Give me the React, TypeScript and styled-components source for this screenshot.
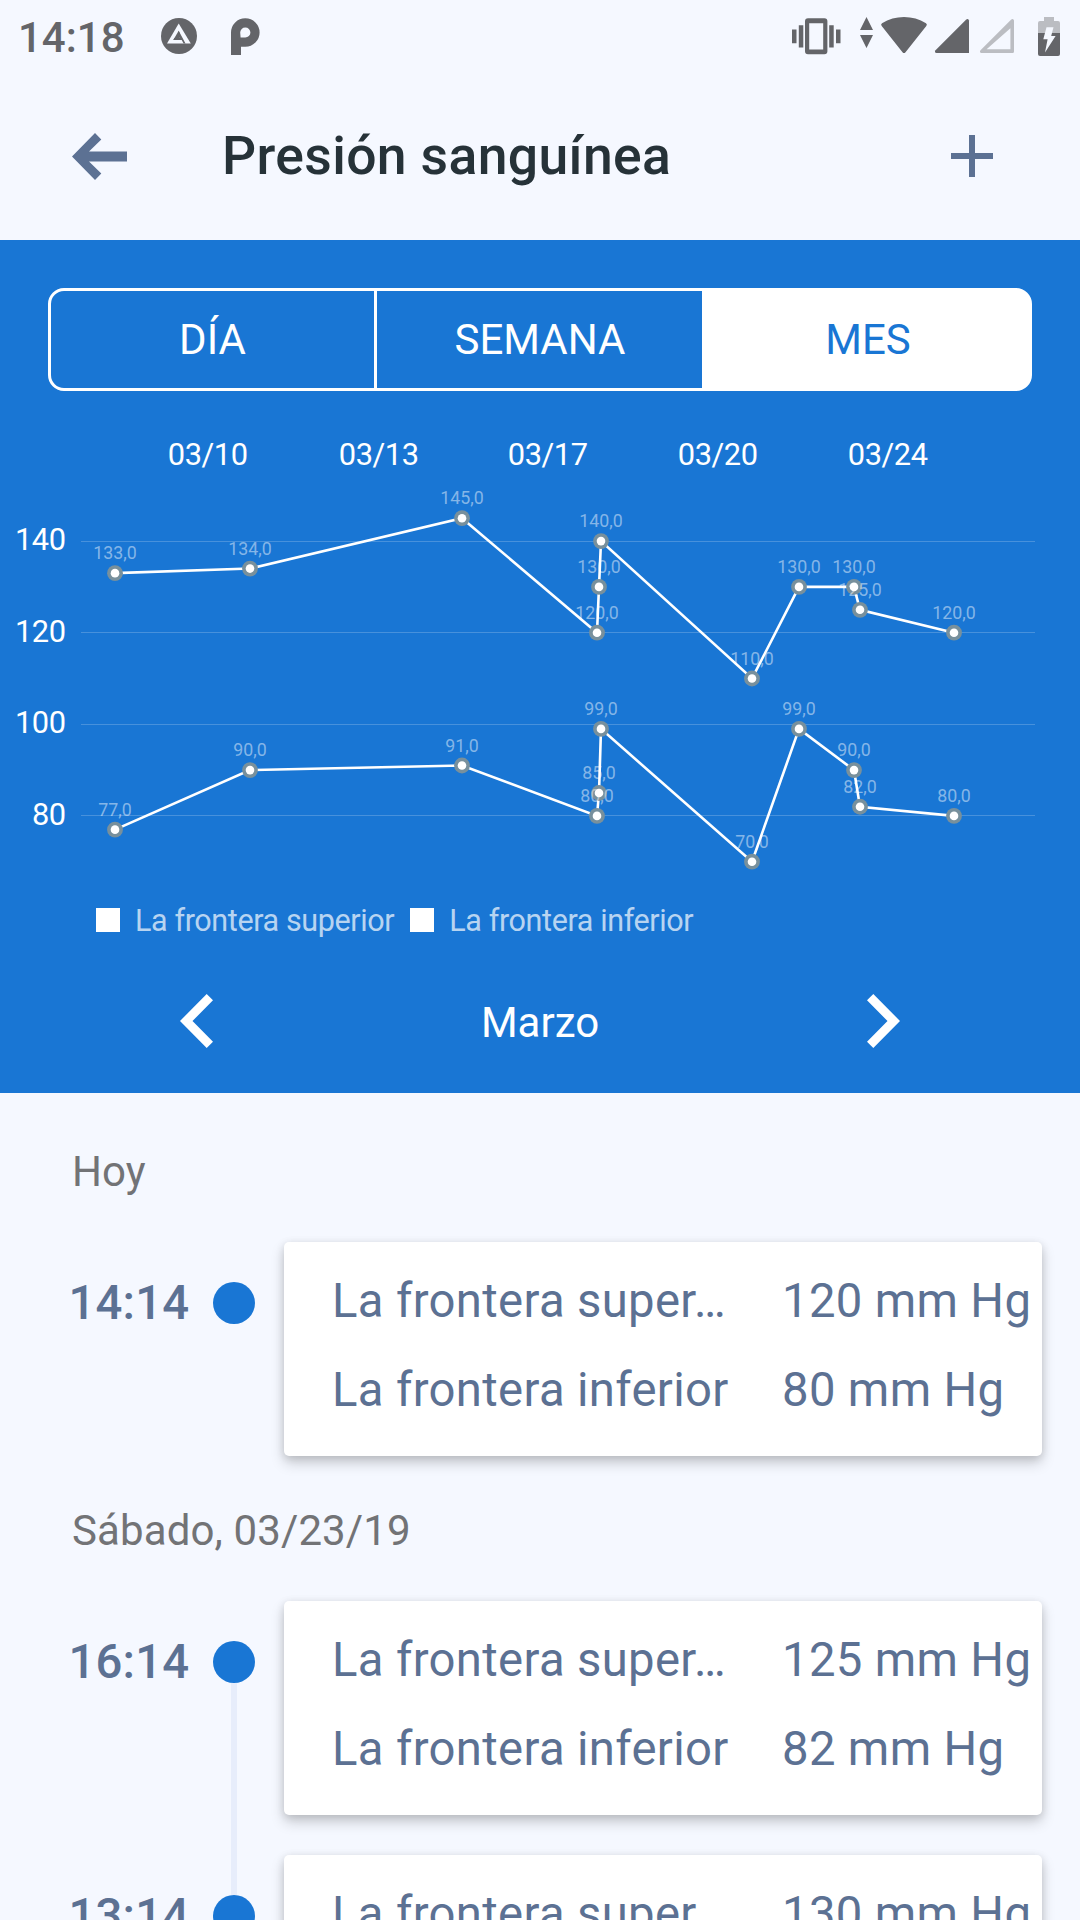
import React from "react";
import styled, { createGlobalStyle } from "styled-components";

const BLUE = "#1976d4";
const SLATE = "#5c7193";
const PAPER = "#f5f8ff";
const STATUS = "#646569";

const GlobalStyle = createGlobalStyle`
  *, *::before, *::after { box-sizing: border-box; }
  body { margin: 0; background: ${PAPER}; }
`;

const Screen = styled.div`
  width: 1080px;
  height: 1920px;
  overflow: hidden;
  display: flex;
  flex-direction: column;
  background: ${PAPER};
  font-family: Roboto, "Noto Sans", sans-serif;
`;

const StatusBar = styled.div`
  height: 72px;
  flex: none;
  display: flex;
  align-items: center;
  padding: 0 20px 0 18px;
  color: ${STATUS};
`;

const Clock = styled.span`
  width: 140px;
  font-size: 42px;
  line-height: 50px;
  padding-top: 4px;
  font-weight: 500;
`;

const Icon = styled.svg<{ $gap?: number }>`
  display: block;
  flex: none;
  overflow: visible;
  margin-left: ${(p) => p.$gap ?? 0}px;
`;

const Spacer = styled.div`
  flex: 1;
`;

const AppBar = styled.header`
  height: 168px;
  flex: none;
  display: flex;
  align-items: center;
  padding: 0 87px 0 72px;
`;

const IconButton = styled.button`
  display: flex;
  border: 0;
  padding: 0;
  background: none;
`;

const Title = styled.h1`
  flex: 1;
  margin: 0 0 0 95px;
  padding-bottom: 1px;
  font-size: 53.5px;
  line-height: 62px;
  font-weight: 500;
  letter-spacing: 0.35px;
  color: #263238;
`;

const Panel = styled.section`
  height: 853px;
  flex: none;
  display: flex;
  flex-direction: column;
  background: ${BLUE};
  padding-top: 48px;
`;

const Tabs = styled.div`
  display: grid;
  grid-template-columns: 329px 325px 330px;
  height: 103px;
  margin: 0 48px;
`;

const Tab = styled.button<{ $active?: boolean }>`
  border: 3px solid #fff;
  padding: 0;
  font-family: inherit;
  font-size: 42px;
  background: ${(p) => (p.$active ? "#fff" : "transparent")};
  color: ${(p) => (p.$active ? BLUE : "#fff")};

  &:first-child {
    border-radius: 16px 0 0 16px;
  }
  &:nth-child(2) {
    border-width: 3px 0;
    padding-left: 1px;
  }
  &:last-child {
    border-radius: 0 16px 16px 0;
    padding-left: 2px;
  }
`;

const Chart = styled.svg`
  display: block;
  flex: none;
  font-family: Roboto, "Noto Sans", sans-serif;
`;

const Legend = styled.div`
  display: flex;
  align-items: center;
  height: 40px;
  padding-left: 96px;
  gap: 16px;
`;

const LegendItem = styled.div`
  display: flex;
  align-items: center;
  gap: 15px;
  font-size: 30.5px;
  line-height: 36px;
  letter-spacing: -0.38px;
  color: rgba(255, 255, 255, 0.7);
  white-space: nowrap;
`;

const LegendText = styled.span`
  padding-top: 2px;
`;

const Swatch = styled.span`
  width: 24px;
  height: 24px;
  background: #fff;
`;

const MonthNav = styled.nav`
  flex: 1;
  display: flex;
  align-items: center;
  justify-content: space-between;
  padding: 8px 180px 0 180px;
`;

const MonthName = styled.span`
  font-size: 42px;
  line-height: 50px;
  padding-top: 4px;
  color: #fff;
`;

const History = styled.main`
  flex: 1;
  display: flex;
  flex-direction: column;
`;

const DayTitle = styled.h2`
  margin: 0;
  padding: 54px 0 45px 72px;
  font-size: 42px;
  line-height: 50px;
  font-weight: 400;
  letter-spacing: 0.12px;
  color: #727376;
`;

const Day = styled.section`
  display: flex;
  flex-direction: column;
  height: 359px;
  flex: none;
`;

const Entry = styled.article`
  display: flex;
  flex: none;
  height: 254px;
`;

const Time = styled.time`
  width: 213px;
  padding: 33px 0 0 68.5px;
  font-size: 47.25px;
  line-height: 56px;
  font-weight: 500;
  letter-spacing: 0.2px;
  color: ${SLATE};
`;

const Rail = styled.div`
  width: 42px;
  display: flex;
  flex-direction: column;
  align-items: center;
  padding-top: 40px;
`;

const Dot = styled.span`
  flex: none;
  width: 42px;
  height: 42px;
  border-radius: 50%;
  background: ${BLUE};
`;

const Connector = styled.span`
  flex: none;
  width: 6px;
  height: 212px;
  background: #e7edfb;
`;

const Card = styled.div`
  width: 758px;
  height: 214px;
  margin-left: 29px;
  padding: 31px 0 0 48px;
  border-radius: 5px;
  background: #fff;
  box-shadow: 0 7px 14px rgba(0, 0, 0, 0.18), 0 2px 9px rgba(0, 0, 0, 0.12);
`;

const Reading = styled.div`
  display: flex;
  height: 89px;
  font-size: 47.25px;
  line-height: 56px;
  letter-spacing: 0.34px;
  white-space: nowrap;
  color: ${SLATE};
`;

const ReadingName = styled.span`
  width: 402px;
  margin-right: 48px;
`;

type Sample = { x: number; high: number; low: number };

const samples: Sample[] = [
  { x: 115, high: 133, low: 77 },
  { x: 250, high: 134, low: 90 },
  { x: 462, high: 145, low: 91 },
  { x: 597, high: 120, low: 80 },
  { x: 599, high: 130, low: 85 },
  { x: 601, high: 140, low: 99 },
  { x: 752, high: 110, low: 70 },
  { x: 799, high: 130, low: 99 },
  { x: 854, high: 130, low: 90 },
  { x: 860, high: 125, low: 82 },
  { x: 954, high: 120, low: 80 },
];

const dates = [
  { x: 208, label: "03/10" },
  { x: 379, label: "03/13" },
  { x: 548, label: "03/17" },
  { x: 718, label: "03/20" },
  { x: 888, label: "03/24" },
];

const CHART_TOP = 391;
const yOf = (v: number) => 541.1 - CHART_TOP + (140 - v) * 4.58;

function Series({ pick }: { pick: "high" | "low" }) {
  const pts = samples.map((s) => ({ x: s.x, y: yOf(s[pick]), v: s[pick] }));
  return (
    <g>
      <polyline
        points={pts.map((p) => `${p.x},${p.y}`).join(" ")}
        fill="none"
        stroke="#fff"
        strokeWidth={2.6}
      />
      {pts.map((p, i) => (
        <g key={i}>
          <circle cx={p.x} cy={p.y} r={7.9} fill="#78909c" />
          <circle cx={p.x} cy={p.y} r={4.3} fill="#fff" />
        </g>
      ))}
    </g>
  );
}

function Values({ pick }: { pick: "high" | "low" }) {
  return (
    <g fontSize={17.8} fill="#fff" fillOpacity={0.48} textAnchor="middle">
      {samples.map((s, i) => (
        <text key={i} x={s.x + 0.1} y={yOf(s[pick]) - 13.8}>
          {s[pick]},0
        </text>
      ))}
    </g>
  );
}

function PressureChart() {
  return (
    <Chart width="1080" height="509" viewBox="0 0 1080 509">
      <g fontSize={30.8} letterSpacing={-0.4} fill="#fff" textAnchor="middle">
        {dates.map((d) => (
          <text key={d.label} x={d.x - 0.3} y={74}>
            {d.label}
          </text>
        ))}
      </g>
      {[140, 120, 100, 80].map((v) => (
        <g key={v}>
          <text
            x={65.5}
            y={yOf(v) + 9}
            fontSize={30.8}
            letterSpacing={-0.5}
            fill="#fff"
            textAnchor="end"
          >
            {v}
          </text>
          <rect x={81} y={Math.floor(yOf(v))} width={954} height={1} fill="#fff" fillOpacity={0.2} />
        </g>
      ))}
      <Series pick="high" />
      <Series pick="low" />
      <Values pick="high" />
      <Values pick="low" />
    </Chart>
  );
}

type EntryProps = { time: string; high: number; low: number; linked?: boolean };

function PressureEntry({ time, high, low, linked }: EntryProps) {
  return (
    <Entry>
      <Time>{time}</Time>
      <Rail>
        <Dot />
        {linked && <Connector />}
      </Rail>
      <Card>
        <Reading>
          <ReadingName>La frontera super…</ReadingName>
          <span>{high} mm Hg</span>
        </Reading>
        <Reading>
          <ReadingName>La frontera inferior</ReadingName>
          <span>{low} mm Hg</span>
        </Reading>
      </Card>
    </Entry>
  );
}

export default function App() {
  return (
    <Screen>
      <GlobalStyle />
      <StatusBar>
        <Clock>14:18</Clock>
        <Icon $gap={3} width="36" height="36" viewBox="0 0 36 36">
          <circle cx="18" cy="18" r="18" fill={STATUS} />
          <path d="M17.7 5.500 29.800 25.500H6Z" fill={PAPER} />
          <path d="M17.700 12.800 24.500 25.600H22.600L20.700 22H12.200L13.400 20H18.600L16.700 16.800Z" fill={STATUS} />
          <path d="M12.400 21.800 17.700 12.800 18.700 15.200 18.600 20Z" fill={STATUS} />
        </Icon>
        <Icon $gap={34} width="29" height="37" viewBox="0 0 29 37">
          <path
            fillRule="evenodd"
            fill={STATUS}
            d="M0 37V14.5A14.3 14.3 0 1 1 14.3 28.8H10V37ZM9.6 19.6H14.3A5.1 5.1 0 1 0 9.2 14.5Z"
          />
        </Icon>
        <Spacer />
        <Icon width="49" height="36" viewBox="0 0 49 36" fill={STATUS}>
          <path
            fillRule="evenodd"
            d="M16 .3H32.400Q35.400 .3 35.400 3.300V33.200Q35.400 36.200 32.400 36.200H16Q13 36.200 13 33.200V3.300Q13 .3 16 .3ZM17.200 5.300V31.400H31.200V5.300Z"
          />
          <path d="M0 11.500H4.500V25.200H0ZM6.800 7.200H11.300V29.500H6.800ZM37.200 7.200H41.700V29.500H37.200ZM44 11.500H48.500V25.200H44Z" />
        </Icon>
        <Icon $gap={19} width="13" height="38" viewBox="0 0 13 38" fill={STATUS}>
          <path d="M6.5 0 13 13H0ZM0 18H13L6.5 31Z" />
        </Icon>
        <Icon $gap={7.5} width="46" height="38" viewBox="0 0 46 38" fill={STATUS}>
          <path d="M.7 9Q-.6 7.500 1 6.300Q11 0 23 0T45 6.300Q46.600 7.500 45.300 9L24.500 35.200Q23 37 21.500 35.200Z" />
        </Icon>
        <Icon $gap={8.5} width="34" height="34" viewBox="0 0 34 34" fill={STATUS}>
          <path d="M34 1.500V34H1.500Q-1 33.500.5 31.200L31 .7Q33 -.8 34 1.500Z" />
        </Icon>
        <Icon $gap={11} width="34" height="34" viewBox="0 0 34 34">
          <path
            fillRule="evenodd"
            fill="#bbbdc2"
            d="M34 1.500V32.500Q34 34 32.500 34H1.500Q-1 33.500.5 31.200L31 .7Q33 -.8 34 1.500ZM30.400 9.300V30.200H6.600Z"
          />
        </Icon>
        <Icon $gap={24} width="22" height="39" viewBox="0 0 22 39">
          <path fill="#bbbdc2" d="M6 0H16V4H20Q22 4 22 6V16H0V6Q0 4 2 4H6Z" />
          <path fill={STATUS} d="M0 16H22V37Q22 39 20 39H2Q0 39 0 37Z" />
          <path fill={PAPER} d="M8.500 10.300H15.500L13.200 19H17.600L7 35.500 9.600 22.300H5.300Z" />
        </Icon>
      </StatusBar>
      <AppBar>
        <IconButton aria-label="Atrás">
          <Icon width="55" height="47" viewBox="0 0 55 47" fill={SLATE}>
            <path d="M0 23.500 23 0 29.300 6.500 17 18.500H55V28.500H17L29.300 40.500 23 47Z" />
          </Icon>
        </IconButton>
        <Title>Presión sanguínea</Title>
        <IconButton aria-label="Añadir">
          <Icon width="42" height="42" viewBox="0 0 42 42" fill={SLATE}>
            <path d="M18 0H24V18H42V24H24V42H18V24H0V18H18Z" />
          </Icon>
        </IconButton>
      </AppBar>
      <Panel>
        <Tabs>
          <Tab>DÍA</Tab>
          <Tab>SEMANA</Tab>
          <Tab $active>MES</Tab>
        </Tabs>
        <PressureChart />
        <Legend>
          <LegendItem>
            <Swatch />
            <LegendText>La frontera superior</LegendText>
          </LegendItem>
          <LegendItem>
            <Swatch />
            <LegendText>La frontera inferior</LegendText>
          </LegendItem>
        </Legend>
        <MonthNav>
          <IconButton aria-label="Mes anterior">
            <Icon width="33" height="54" viewBox="0 0 33 54" fill="#fff">
              <path d="M0 27 26.700 0 33 6.300 12.500 27 33 47.700 26.700 54Z" />
            </Icon>
          </IconButton>
          <MonthName>Marzo</MonthName>
          <IconButton aria-label="Mes siguiente">
            <Icon width="33" height="54" viewBox="0 0 33 54" fill="#fff">
              <path d="M33 27 6.300 0 0 6.300 20.500 27 0 47.700 6.300 54Z" />
            </Icon>
          </IconButton>
        </MonthNav>
      </Panel>
      <History>
        <Day>
          <DayTitle>Hoy</DayTitle>
          <PressureEntry time="14:14" high={120} low={80} />
        </Day>
        <Day>
          <DayTitle>Sábado, 03/23/19</DayTitle>
          <PressureEntry time="16:14" high={125} low={82} linked />
          <PressureEntry time="13:14" high={130} low={90} />
        </Day>
      </History>
    </Screen>
  );
}
